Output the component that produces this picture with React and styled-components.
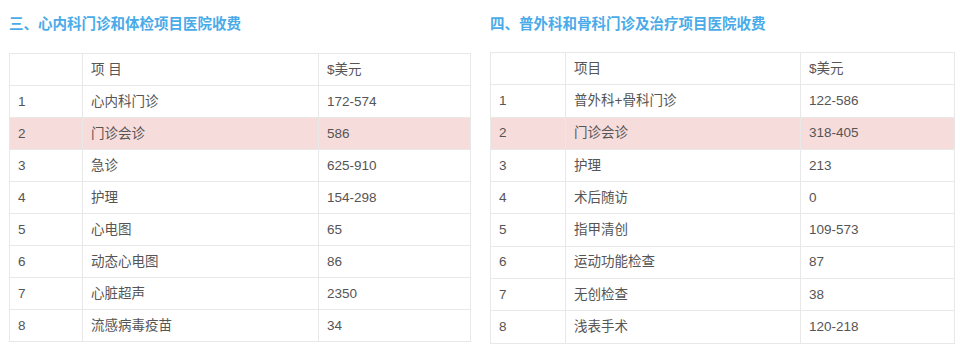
import React from 'react';
import styled, { createGlobalStyle } from 'styled-components';

const GlobalStyle = createGlobalStyle`
  html, body {
    margin: 0;
    padding: 0;
    background: #ffffff;
  }
  body {
    font-family: "Liberation Sans", "Noto Sans CJK SC", sans-serif;
  }
`;

const Page = styled.div`
  display: flex;
  align-items: flex-start;
  gap: 20px;
  padding: 0 6px 0 9px;
  width: 960px;
  height: 348px;
  box-sizing: border-box;
  overflow: hidden;
`;

const Section = styled.section`
  width: ${(p) => p.width}px;
  flex-shrink: 0;
`;

const Title = styled.h3`
  margin: 0;
  padding-top: 14px;
  line-height: 20px;
  font-size: 14.5px;
  font-weight: bold;
  color: #4aabe8;
  white-space: nowrap;
`;

const Table = styled.table`
  margin-top: ${(p) => p.top}px;
  width: 100%;
  border-collapse: collapse;
  table-layout: fixed;
  font-size: 13.5px;
  color: #555555;
`;

const Row = styled.tr`
  height: ${(p) => p.h}px;
  background: ${(p) => (p.hot ? '#f7dcdc' : 'transparent')};
`;

const Cell = styled.td`
  border: 1px solid #e8e8e8;
  padding: 0 0 0 8px;
  text-align: left;
  vertical-align: middle;
  font-weight: normal;
  white-space: nowrap;
  line-height: 18px;
`;

const cardio = [
  ['1', '心内科门诊', '172-574'],
  ['2', '门诊会诊', '586'],
  ['3', '急诊', '625-910'],
  ['4', '护理', '154-298'],
  ['5', '心电图', '65'],
  ['6', '动态心电图', '86'],
  ['7', '心脏超声', '2350'],
  ['8', '流感病毒疫苗', '34'],
];

const surgery = [
  ['1', '普外科+骨科门诊', '122-586'],
  ['2', '门诊会诊', '318-405'],
  ['3', '护理', '213'],
  ['4', '术后随访', '0'],
  ['5', '指甲清创', '109-573'],
  ['6', '运动功能检查', '87'],
  ['7', '无创检查', '38'],
  ['8', '浅表手术', '120-218'],
];

const FeeTable = ({ title, head, rows, widths, top, rowH, width }) => (
  <Section width={width}>
    <Title>{title}</Title>
    <Table top={top}>
      <colgroup>
        {widths.map((w, i) => (
          <col key={i} style={{ width: w }} />
        ))}
      </colgroup>
      <tbody>
        <Row h={rowH}>
          <Cell />
          <Cell>{head}</Cell>
          <Cell>$美元</Cell>
        </Row>
        {rows.map((r) => (
          <Row key={r[0]} h={rowH} hot={r[0] === '2'}>
            <Cell>{r[0]}</Cell>
            <Cell>{r[1]}</Cell>
            <Cell>{r[2]}</Cell>
          </Row>
        ))}
      </tbody>
    </Table>
  </Section>
);

const App = () => (
  <>
    <GlobalStyle />
    <Page>
      <FeeTable
        title="三、心内科门诊和体检项目医院收费"
        head="项 目"
        rows={cardio}
        widths={[73, 236, 152]}
        top={19}
        rowH={32}
        width={461}
      />
      <FeeTable
        title="四、普外科和骨科门诊及治疗项目医院收费"
        head="项目"
        rows={surgery}
        widths={[75, 235, 154]}
        top={18}
        rowH={32.3}
        width={464}
      />
    </Page>
  </>
);

export default App;
